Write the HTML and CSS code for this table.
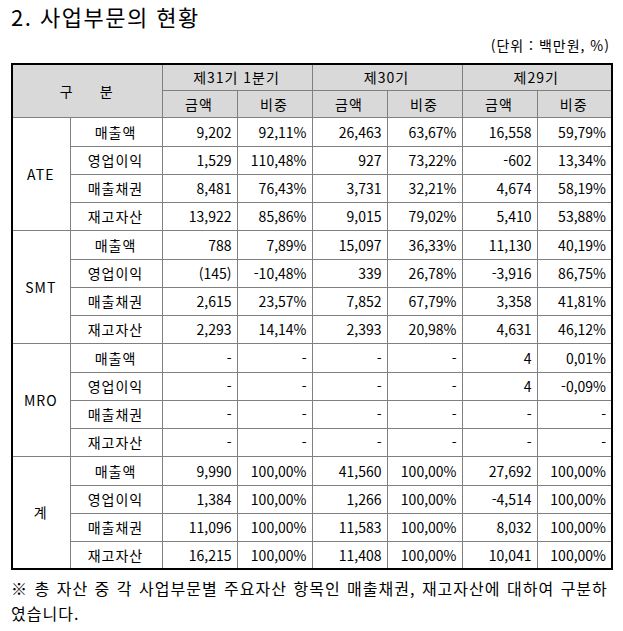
FILE: index.html
```html
<!DOCTYPE html>
<html lang="ko">
<head>
<meta charset="utf-8">
<link rel="stylesheet" href="styles.css">
</head>
<body>
<div class="page">
  <h1 class="title">2. 사업부문의 현황</h1>
  <div class="unit">(단위 : 백만원, %)</div>
  <table class="grid">
    <colgroup>
      <col class="c-seg"><col class="c-item">
      <col class="c-num"><col class="c-num"><col class="c-num"><col class="c-num"><col class="c-num"><col class="c-num">
    </colgroup>
    <thead>
      <tr class="h1">
        <th colspan="2" rowspan="2"><span class="gu">구</span><span>분</span></th>
        <th colspan="2">제31기 1분기</th>
        <th colspan="2">제30기</th>
        <th colspan="2">제29기</th>
      </tr>
      <tr class="h2">
        <th>금액</th><th>비중</th><th>금액</th><th>비중</th><th>금액</th><th>비중</th>
      </tr>
    </thead>
    <tbody>
      <tr class="first"><td class="seg" rowspan="4">ATE</td><td class="item">매출액</td><td>9,202</td><td>92,11%</td><td>26,463</td><td>63,67%</td><td>16,558</td><td>59,79%</td></tr>
      <tr><td class="item">영업이익</td><td>1,529</td><td>110,48%</td><td>927</td><td>73,22%</td><td>-602</td><td>13,34%</td></tr>
      <tr><td class="item">매출채권</td><td>8,481</td><td>76,43%</td><td>3,731</td><td>32,21%</td><td>4,674</td><td>58,19%</td></tr>
      <tr><td class="item">재고자산</td><td>13,922</td><td>85,86%</td><td>9,015</td><td>79,02%</td><td>5,410</td><td>53,88%</td></tr>

      <tr class="first"><td class="seg" rowspan="4">SMT</td><td class="item">매출액</td><td>788</td><td>7,89%</td><td>15,097</td><td>36,33%</td><td>11,130</td><td>40,19%</td></tr>
      <tr><td class="item">영업이익</td><td>(145)</td><td>-10,48%</td><td>339</td><td>26,78%</td><td>-3,916</td><td>86,75%</td></tr>
      <tr><td class="item">매출채권</td><td>2,615</td><td>23,57%</td><td>7,852</td><td>67,79%</td><td>3,358</td><td>41,81%</td></tr>
      <tr><td class="item">재고자산</td><td>2,293</td><td>14,14%</td><td>2,393</td><td>20,98%</td><td>4,631</td><td>46,12%</td></tr>

      <tr class="first"><td class="seg" rowspan="4">MRO</td><td class="item">매출액</td><td>-</td><td>-</td><td>-</td><td>-</td><td>4</td><td>0,01%</td></tr>
      <tr><td class="item">영업이익</td><td>-</td><td>-</td><td>-</td><td>-</td><td>4</td><td>-0,09%</td></tr>
      <tr><td class="item">매출채권</td><td>-</td><td>-</td><td>-</td><td>-</td><td>-</td><td>-</td></tr>
      <tr><td class="item">재고자산</td><td>-</td><td>-</td><td>-</td><td>-</td><td>-</td><td>-</td></tr>

      <tr class="first"><td class="seg" rowspan="4">계</td><td class="item">매출액</td><td>9,990</td><td>100,00%</td><td>41,560</td><td>100,00%</td><td>27,692</td><td>100,00%</td></tr>
      <tr><td class="item">영업이익</td><td>1,384</td><td>100,00%</td><td>1,266</td><td>100,00%</td><td>-4,514</td><td>100,00%</td></tr>
      <tr><td class="item">매출채권</td><td>11,096</td><td>100,00%</td><td>11,583</td><td>100,00%</td><td>8,032</td><td>100,00%</td></tr>
      <tr><td class="item">재고자산</td><td>16,215</td><td>100,00%</td><td>11,408</td><td>100,00%</td><td>10,041</td><td>100,00%</td></tr>
    </tbody>
  </table>
  <p class="note">※ 총 자산 중 각 사업부문별 주요자산 항목인 매출채권, 재고자산에 대하여 구분하였습니다.</p>
</div>
</body>
</html>
```

FILE: styles.css
```css
html, body {
  margin: 0;
  padding: 0;
  background: #fff;
}

body {
  font-family: "Noto Sans CJK KR", "Liberation Sans", sans-serif;
  color: #000;
}

.page {
  padding: 1px 10px 0 11px;
}

.title {
  margin: 0;
  font-size: 22px;
  font-weight: normal;
  line-height: 30px;
  letter-spacing: 1.5px;
}

.unit {
  margin-top: 4px;
  font-size: 14px;
  line-height: 20px;
  text-align: right;
  padding-right: 3px;
  letter-spacing: 1px;
}

.grid {
  margin-top: 8px;
  width: 601px;
  border-collapse: collapse;
  border: 2px solid #000;
  table-layout: fixed;
  font-size: 14px;
}

.c-seg { width: 58px; }
.c-item { width: 92px; }
.c-num { width: 75px; }

.grid th,
.grid td {
  border: 1px solid #808080;
  padding: 0 5px 0 4px;
  line-height: 16px;
  white-space: nowrap;
}

.grid th {
  background: #d9d9d9;
  font-weight: normal;
  text-align: center;
  letter-spacing: 1px;
}

.h1 { height: 26px; }
.h2 { height: 27px; }

.grid tbody tr { height: 28px; }
.grid tbody tr.first { height: 29px; }

.grid td {
  text-align: right;
}

.grid td.seg,
.grid td.item {
  text-align: center;
  letter-spacing: 1px;
}

.gu {
  margin-right: 26px;
}

.note {
  margin: 6px 0 0 0;
  padding-left: 0;
  width: 606px;
  font-size: 16px;
  line-height: 25px;
  letter-spacing: 1px;
  word-spacing: 1px;
  word-break: break-all;
}
```
